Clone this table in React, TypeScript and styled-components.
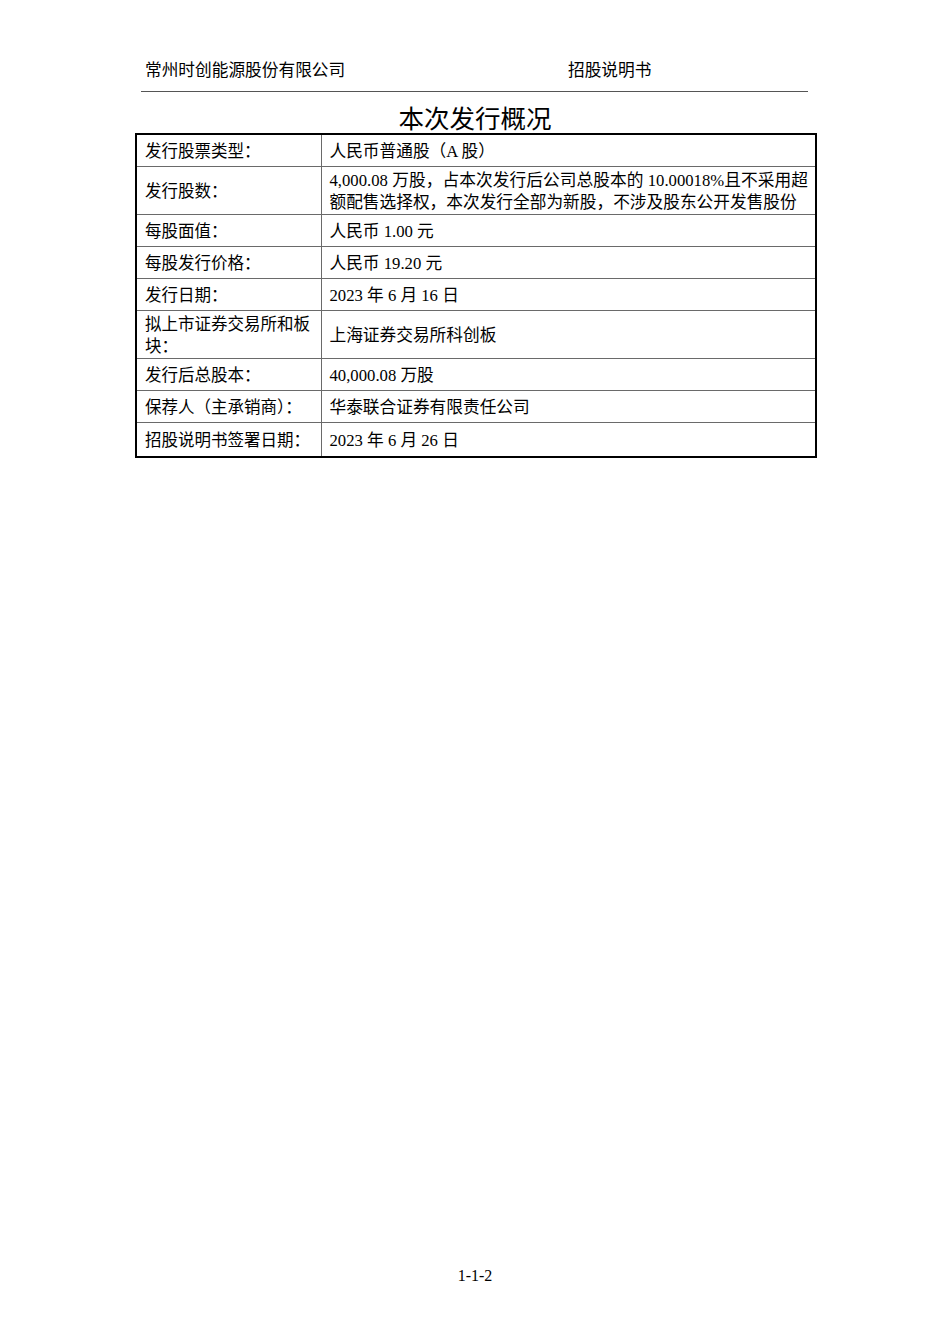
import React from "react";
import styled, { createGlobalStyle } from "styled-components";

const GlobalStyle = createGlobalStyle`
  html, body {
    margin: 0;
    padding: 0;
    background: #ffffff;
  }
`;

const CJK_SANS = `"Noto Sans CJK SC", "Noto Sans", sans-serif`;
const MIXED = `"Liberation Serif", "Noto Sans CJK SC", serif`;

const Page = styled.div`
  width: 950px;
  min-height: 1344px;
  box-sizing: border-box;
  display: flex;
  flex-direction: column;
  color: #000;
`;

const RunningHead = styled.header`
  margin: 0 142px 0 141px;
  padding: 58px 0 11px 4px;
  display: grid;
  grid-template-columns: 423px 1fr;
  border-bottom: 1.5px solid #555;
`;

const HeadText = styled.span`
  font-family: ${CJK_SANS};
  font-size: 16.7px;
  line-height: 22px;
`;

const Title = styled.h1`
  margin: 9px 0 0;
  font-family: ${CJK_SANS};
  font-weight: 400;
  font-size: 25.5px;
  line-height: 32px;
  text-align: center;
`;

const OverviewTable = styled.table`
  margin: 0 0 0 135px;
  width: 682px;
  table-layout: fixed;
  border-collapse: collapse;
  border: 2px solid #000;

  tr:last-child td {
    height: 29px;
  }
`;

const Cell = styled.td`
  height: 27px;
  padding: 2px 8px;
  border: 1px solid #6a6a6a;
  vertical-align: middle;
  line-height: 21.5px;
`;

const LabelCell = styled(Cell)`
  padding-right: 4px;
  font-family: ${CJK_SANS};
  font-size: 16.5px;
`;

const ValueCell = styled(Cell)`
  padding: 3px 7px 1px 8px;
  font-family: ${MIXED};
  font-size: 16.7px;
`;

const JustifiedLine = styled.span`
  display: block;
  white-space: nowrap;
  text-align: justify;
  text-align-last: justify;
`;

const PlainLine = styled.span`
  display: block;
  white-space: nowrap;
`;

const PageNumber = styled.footer`
  margin-top: auto;
  padding-bottom: 58px;
  font-family: "Liberation Serif", serif;
  font-size: 16px;
  line-height: 20px;
  text-align: center;
`;

interface Row {
  label: string;
  value: React.ReactNode;
}

const rows: Row[] = [
  { label: "发行股票类型：", value: "人民币普通股（A 股）" },
  {
    label: "发行股数：",
    value: (
      <>
        <JustifiedLine>4,000.08 万股，占本次发行后公司总股本的 10.00018%且不采用超</JustifiedLine>
        <PlainLine>额配售选择权，本次发行全部为新股，不涉及股东公开发售股份</PlainLine>
      </>
    ),
  },
  { label: "每股面值：", value: "人民币 1.00 元" },
  { label: "每股发行价格：", value: "人民币 19.20 元" },
  { label: "发行日期：", value: "2023 年 6 月 16 日" },
  { label: "拟上市证券交易所和板块：", value: "上海证券交易所科创板" },
  { label: "发行后总股本：", value: "40,000.08 万股" },
  { label: "保荐人（主承销商）：", value: "华泰联合证券有限责任公司" },
  { label: "招股说明书签署日期：", value: "2023 年 6 月 26 日" },
];

export default function App() {
  return (
    <>
      <GlobalStyle />
      <Page>
        <RunningHead>
          <HeadText>常州时创能源股份有限公司</HeadText>
          <HeadText>招股说明书</HeadText>
        </RunningHead>
        <Title>本次发行概况</Title>
        <OverviewTable>
          <colgroup>
            <col style={{ width: 185 }} />
            <col />
          </colgroup>
          <tbody>
            {rows.map((row) => (
              <tr key={row.label}>
                <LabelCell>{row.label}</LabelCell>
                <ValueCell>{row.value}</ValueCell>
              </tr>
            ))}
          </tbody>
        </OverviewTable>
        <PageNumber>1-1-2</PageNumber>
      </Page>
    </>
  );
}
